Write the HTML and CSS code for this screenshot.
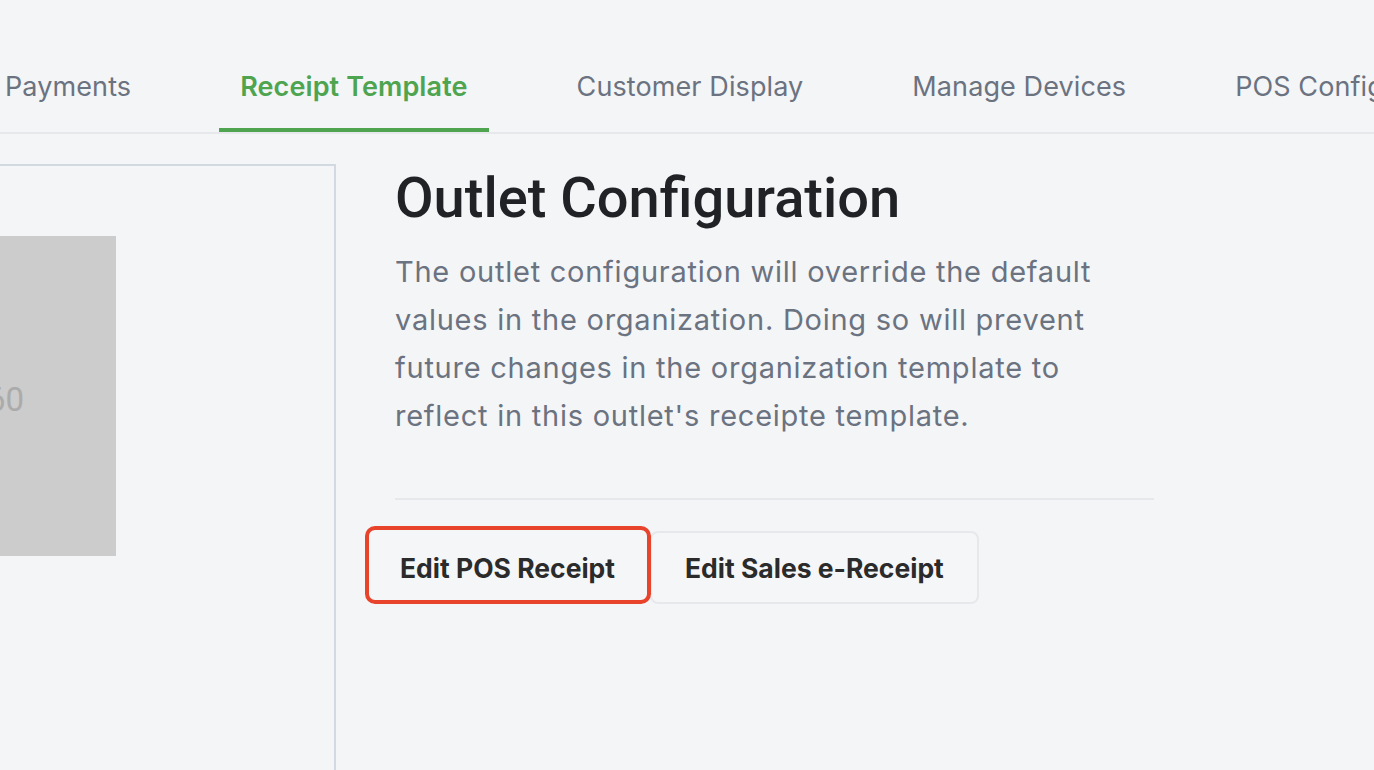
FILE: index.html
```html
<!DOCTYPE html>
<html lang="en">
<head>
<meta charset="utf-8">
<title>Outlet Configuration</title>
<link rel="stylesheet" href="styles.css">
</head>
<body>
  <nav class="tabs">
    <a class="tab">Payments</a>
    <a class="tab active">Receipt Template</a>
    <a class="tab">Customer Display</a>
    <a class="tab">Manage Devices</a>
    <a class="tab">POS Configuration</a>
  </nav>
  <main class="content">
    <section class="preview">
      <div class="placeholder"><span class="ph-text">300 × 160</span></div>
    </section>
    <section class="config">
      <h1 class="title">Outlet Configuration</h1>
      <p class="desc">The outlet configuration will override the default values in the organization. Doing so will prevent future changes in the organization template to reflect in this outlet's receipte template.</p>
      <hr class="divider">
      <div class="actions">
        <button class="btn btn-highlight">Edit POS Receipt</button>
        <button class="btn">Edit Sales e-Receipt</button>
      </div>
    </section>
  </main>
</body>
</html>
```
FILE: styles.css
```css
html, body {
  margin: 0;
  padding: 0;
}
body {
  background: #f4f5f7;
  font-family: Inter, "Noto Sans", sans-serif;
  overflow: hidden;
  width: 1374px;
  height: 770px;
}
.tabs {
  display: flex;
  gap: 67px;
  margin-left: -16px;
  padding-top: 45px;
  border-bottom: 2px solid #e6e8eb;
  white-space: nowrap;
}
.tab {
  display: block;
  padding: 0 21px;
  height: 83px;
  line-height: 84px;
  font-size: 27px;
  letter-spacing: 0.1px;
  color: #6b7280;
  border-bottom: 4px solid transparent;
}
.tab.active {
  color: #4ea44f;
  font-weight: 600;
  border-bottom-color: #4ea44f;
}
.content {
  display: flex;
  align-items: flex-start;
  padding-top: 30px;
}
.preview {
  margin-left: -100px;
  width: 436px;
  height: 700px;
  border: 2px solid #d2d9e0;
  padding-top: 70px;
  box-sizing: border-box;
  flex-shrink: 0;
}
.placeholder {
  width: 214px;
  height: 320px;
  background: #cccccc;
  display: flex;
  align-items: center;
  justify-content: flex-end;
  overflow: hidden;
  padding-top: 6px;
  box-sizing: border-box;
}
.ph-text {
  font-family: Roboto, sans-serif;
  font-size: 33px;
  color: #ababab;
  margin-right: 92px;
  white-space: nowrap;
}
.config {
  margin-left: 59px;
  width: 759px;
}
.title {
  margin: 0;
  font-family: Roboto, sans-serif;
  font-weight: 500;
  font-size: 56px;
  line-height: 68px;
  color: #202226;
}
.desc {
  margin: 16px 0 0;
  font-size: 29px;
  letter-spacing: 0.75px;
  line-height: 48px;
  color: #6b7280;
  width: 740px;
}
.divider {
  margin: 58px 0 0;
  border: 0;
  border-top: 2px solid #e6e8eb;
}
.actions {
  display: flex;
  margin-left: -30px;
  margin-top: 31px;
}
.btn {
  position: relative;
  height: 73px;
  padding: 0 33px;
  background: #f5f6f8;
  border: 2px solid #e6e8eb;
  border-radius: 8px;
  font-family: Inter, sans-serif;
  font-weight: 700;
  font-size: 26.5px;
  color: #2b2b2b;
  cursor: pointer;
}
.btn-highlight {
  border-color: transparent;
  z-index: 1;
}
.btn-highlight::after {
  content: "";
  position: absolute;
  top: -7px;
  left: -2px;
  right: -3px;
  bottom: -2px;
  border: 4px solid #e8442c;
  border-radius: 10px;
}
```
